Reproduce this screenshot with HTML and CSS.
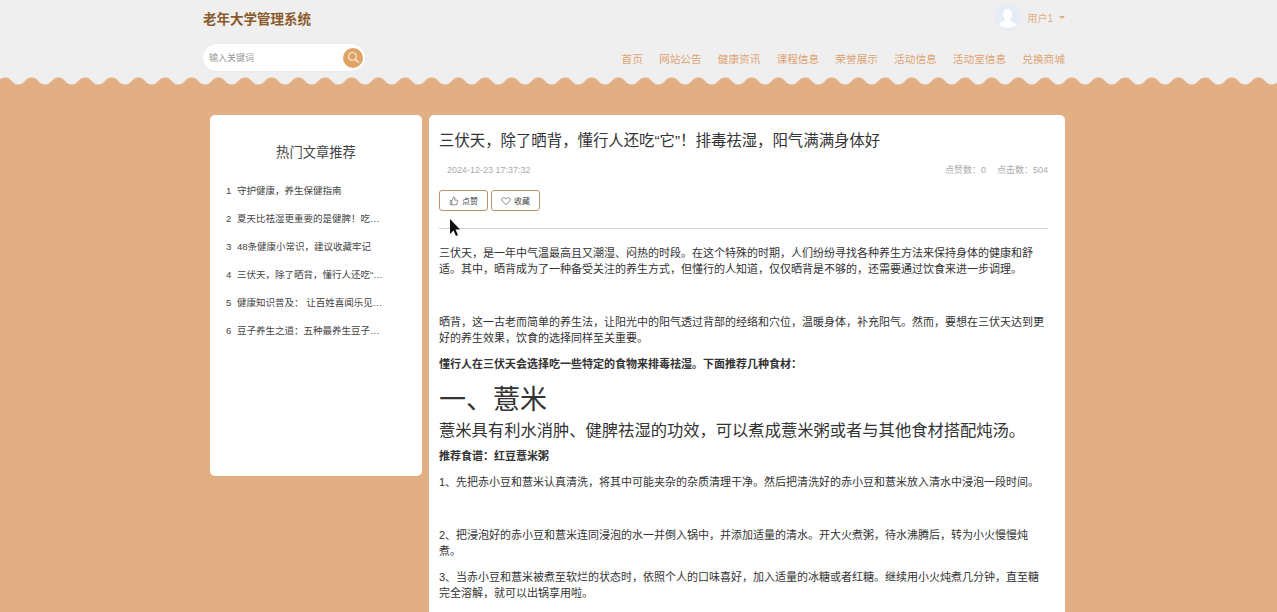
FILE: index.html
```html
<!DOCTYPE html>
<html lang="zh">
<head>
<meta charset="utf-8">
<title>老年大学管理系统</title>
<link rel="stylesheet" href="styles.css">
</head>
<body>
<header class="header">
  <div class="header-inner">
    <div class="top-row">
      <div class="logo">老年大学管理系统</div>
      <div class="user">
        <svg class="avatar" viewBox="0 0 27 27"><circle cx="13.5" cy="13.5" r="13.5" fill="#e6ebf5"/><path d="M13.5 5c-3 0-4.6 2.4-4.6 5.3 0 2 .8 3.700 2 4.700v1.600c-1.500 1-5.200 1.600-6 4.400a13.500 13.500 0 0 0 17.200 0c-.8-2.800-4.500-3.400-6-4.400V15c1.200-1 2-2.700 2-4.700C18.100 7.400 16.500 5 13.500 5z" fill="#fff"/></svg>
        <span class="user-name">用户1</span>
        <span class="caret"></span>
      </div>
    </div>
    <div class="bottom-row">
      <div class="search">
        <span class="search-text">输入关键词</span>
        <span class="search-btn"><svg viewBox="0 0 14 14" width="13" height="13"><circle cx="5.800" cy="5.800" r="4.300" fill="none" stroke="#fff" stroke-width="1"/><path d="M9 9l3.800 3.800" stroke="#fff" stroke-width="1.200" fill="none"/></svg></span>
      </div>
      <nav class="nav">
        <a>首页</a><a>网站公告</a><a>健康资讯</a><a>课程信息</a><a>荣誉展示</a><a>活动信息</a><a>活动室信息</a><a>兑换商城</a>
      </nav>
    </div>
  </div>
  <svg class="wave" width="100%" height="8">
    <defs>
      <pattern id="w" width="26.67" height="8" patternUnits="userSpaceOnUse" x="-8.330">
        <path d="M0 0H26.670V7.500C20 7.500 20 0.500 13.330 0.500S6.670 7.500 0 7.500Z" fill="#efefef"/>
      </pattern>
    </defs>
    <rect width="100%" height="8" fill="url(#w)"/>
  </svg>
</header>
<main class="main">
  <aside class="side">
    <h3 class="side-title">热门文章推荐</h3>
    <ul class="side-list">
      <li><span class="num">1</span><span class="side-text">守护健康，养生保健指南</span></li>
      <li><span class="num">2</span><span class="side-text">夏天比祛湿更重要的是健脾！吃对了一整年</span></li>
      <li><span class="num">3</span><span class="side-text">48条健康小常识，建议收藏牢记</span></li>
      <li><span class="num">4</span><span class="side-text">三伏天，除了晒背，懂行人还吃“它”！</span></li>
      <li><span class="num">5</span><span class="side-text">健康知识普及： 让百姓喜闻乐见的健康</span></li>
      <li><span class="num">6</span><span class="side-text">豆子养生之道：五种最养生豆子的功效</span></li>
    </ul>
  </aside>
  <article class="article">
    <h1 class="title">三伏天，除了晒背，懂行人还吃“它”！排毒祛湿，阳气满满身体好</h1>
    <div class="meta">
      <span class="date">2024-12-23 17:37:32</span>
      <span class="stats">点赞数：0<span class="gap"></span>点击数：504</span>
    </div>
    <div class="actions">
      <button class="btn"><svg viewBox="0 0 12 12" width="10" height="10"><path d="M3.500 5.500h-2v5h7.700l1.300-4.300c.2-.7-.3-1.200-.9-1.200H7V2.500C7 1.500 6.300 1 5.700 1L3.500 5.500v5" fill="none" stroke="#555" stroke-width=".8"/></svg>点赞</button>
      <button class="btn"><svg viewBox="0 0 12 12" width="10" height="10"><path d="M6 10.500L1.600 6C.4 4.700.8 2.300 2.800 2c1.300-.2 2.500.6 3.200 1.800C6.700 2.600 7.900 1.800 9.200 2c2 .3 2.400 2.700 1.200 4z" fill="none" stroke="#555" stroke-width=".8"/></svg>收藏</button>
    </div>
    <hr class="rule">
    <div class="content">
      <p>三伏天，是一年中气温最高且又潮湿、闷热的时段。在这个特殊的时期，人们纷纷寻找各种养生方法来保持身体的健康和舒适。其中，晒背成为了一种备受关注的养生方式，但懂行的人知道，仅仅晒背是不够的，还需要通过饮食来进一步调理。</p>
      <p class="spaced">晒背，这一古老而简单的养生法，让阳光中的阳气透过背部的经络和穴位，温暖身体，补充阳气。然而，要想在三伏天达到更好的养生效果，饮食的选择同样至关重要。</p>
      <p><strong>懂行人在三伏天会选择吃一些特定的食物来排毒祛湿。下面推荐几种食材：</strong></p>
      <h2 class="h-big">一、薏米</h2>
      <h3 class="h-mid">薏米具有利水消肿、健脾祛湿的功效，可以煮成薏米粥或者与其他食材搭配炖汤。</h3>
      <p class="tight"><strong>推荐食谱：红豆薏米粥</strong></p>
      <p>1、先把赤小豆和薏米认真清洗，将其中可能夹杂的杂质清理干净。然后把清洗好的赤小豆和薏米放入清水中浸泡一段时间。</p>
      <p class="spaced">2、把浸泡好的赤小豆和薏米连同浸泡的水一并倒入锅中，并添加适量的清水。开大火煮粥，待水沸腾后，转为小火慢慢炖煮。</p>
      <p>3、当赤小豆和薏米被煮至软烂的状态时，依照个人的口味喜好，加入适量的冰糖或者红糖。继续用小火炖煮几分钟，直至糖完全溶解，就可以出锅享用啦。</p>
      <h2 class="h-big">二、冬瓜</h2>
    </div>
  </article>
</main>
<svg class="cursor" width="12" height="18" viewBox="0 0 12 18"><path d="M1 0v15l3.500-3.500 2.500 5.500 2-1-2.500-5.500H11z" fill="#111"/></svg>
</body>
</html>
```
FILE: styles.css
```css
* { box-sizing: border-box; }
html, body { margin: 0; padding: 0; height: 612px; overflow: hidden; }
body {
  background: #e2ae83;
  font-family: "Liberation Sans", "Noto Sans CJK SC", sans-serif;
  color: #333;
  position: relative;
}
.header { background: transparent; }
.header-inner { background: #efefef; height: 77px; padding: 0 212px 0 203px; }
.top-row { display: flex; justify-content: space-between; align-items: flex-start; height: 43px; }
.logo { font-size: 13.500px; font-weight: 700; color: #8a5a2b; margin-top: 11px; line-height: 18px; }
.user { display: flex; align-items: center; margin-top: 4px; }
.avatar { width: 27px; height: 27px; }
.user-name { font-size: 10px; color: #dfae84; margin-left: 6px; }
.caret { width: 0; height: 0; border: 3px solid transparent; border-top-color: #dfae84; border-bottom: 0; margin-left: 6px; }
.bottom-row { display: flex; justify-content: space-between; align-items: flex-start; }
.search { width: 162px; height: 27px; margin-top: 1px; background: #fff; border-radius: 14px; display: flex; align-items: center; justify-content: space-between; padding: 0 2px 0 6px; box-shadow: 0 0 2px #e4e4e4; }
.search-text { font-size: 9px; color: #999; }
.search-btn { width: 20px; height: 20px; border-radius: 50%; background: #e0a365; display: flex; align-items: center; justify-content: center; }
.nav { display: flex; gap: 16px; margin-top: 9px; }
.nav a { font-size: 10.700px; line-height: 14px; color: #dda476; }
.wave { display: block; }
.main { display: flex; align-items: flex-start; gap: 7px; padding: 30px 212px 0 210px; }
.side { width: 212px; height: 361px; flex: none; background: #fff; border-radius: 5px; padding: 29px 16px 0; }
.side-title { margin: 0 0 22px; font-size: 13.300px; font-weight: 400; color: #444; text-align: center; line-height: 18px; }
.side-list { list-style: none; margin: 0; padding: 0; }
.side-list li { display: flex; height: 28px; font-size: 9.500px; line-height: 14px; color: #444; }
.num { width: 11px; flex: none; }
.side-text { width: 149px; white-space: nowrap; overflow: hidden; text-overflow: ellipsis; }
.article { flex: 1; height: 600px; background: #fff; border-radius: 5px; padding: 16px 17px 0 10px; }
.title { margin: 0; font-size: 15.400px; font-weight: 400; line-height: 20px; color: #333; }
.meta { display: flex; justify-content: space-between; margin-top: 12px; padding-left: 8px; font-size: 9px; line-height: 14px; color: #aaa; }
.gap { display: inline-block; width: 11px; }
.actions { display: flex; gap: 3px; margin-top: 13px; }
.btn { width: 49px; height: 21px; padding: 0; background: #fff; border: 1px solid #b8936c; border-radius: 3px; font: 8px "Liberation Sans", "Noto Sans CJK SC", sans-serif; color: #444; display: flex; align-items: center; justify-content: center; gap: 3px; }
.rule { margin: 17px 0 16px; border: 0; border-top: 1px solid #d4d4d4; }
.content p { margin: 0 0 10px; font-size: 11px; line-height: 16px; color: #333; }
.content p.spaced { margin-top: 37px; }
.content p.tight { margin: 6px 0 10px; }
.h-big { margin: 0; font-size: 27px; font-weight: 400; line-height: 36px; color: #333; }
.h-mid { margin: 0; font-size: 16.300px; font-weight: 400; line-height: 24px; color: #333; }
.cursor { position: absolute; left: 449px; top: 219px; }
```
